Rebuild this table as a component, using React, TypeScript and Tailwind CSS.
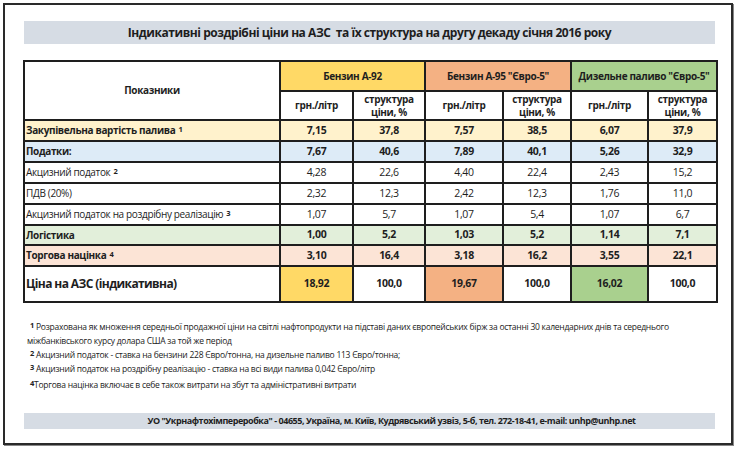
import React from "react";

const F = { fontFamily: '"Open Sans", "Noto Sans", sans-serif' };

type Row = {
  label: React.ReactNode;
  vals: string[];
  bg: string;
  bold: boolean;
  h: string;
};

const Sup = ({ n }: { n: string }) => (
  <sup className="text-[7.5px] font-bold relative -top-[2px] ml-[3px]">{n}</sup>
);

const rows: Row[] = [
  { label: <>Закупівельна вартість палива<Sup n="1" /></>, vals: ["7,15", "37,8", "7,57", "38,5", "6,07", "37,9"], bg: "bg-[#fff2cc]", bold: true, h: "h-[21px]" },
  { label: "Податки:", vals: ["7,67", "40,6", "7,89", "40,1", "5,26", "32,9"], bg: "bg-[#ddebf7]", bold: true, h: "h-[21px]" },
  { label: <>Акцизний податок<Sup n="2" /></>, vals: ["4,28", "22,6", "4,40", "22,4", "2,43", "15,2"], bg: "bg-white", bold: false, h: "h-[21px]" },
  { label: "ПДВ (20%)", vals: ["2,32", "12,3", "2,42", "12,3", "1,76", "11,0"], bg: "bg-white", bold: false, h: "h-[21px]" },
  { label: <>Акцизний податок на роздрібну реалізацію<Sup n="3" /></>, vals: ["1,07", "5,7", "1,07", "5,4", "1,07", "6,7"], bg: "bg-white", bold: false, h: "h-[21px]" },
  { label: "Логістика", vals: ["1,00", "5,2", "1,03", "5,2", "1,14", "7,1"], bg: "bg-[#e2efda]", bold: true, h: "h-[20px]" },
  { label: <>Торгова націнка<Sup n="4" /></>, vals: ["3,10", "16,4", "3,18", "16,2", "3,55", "22,1"], bg: "bg-[#fce4d6]", bold: true, h: "h-[21px]" },
];

const totalBg = ["bg-[#ffd966]", "bg-white", "bg-[#f4b183]", "bg-white", "bg-[#a9d08e]", "bg-white"];

const cell = "border-2 border-[#1e1e1e]";

export default function App() {
  return (
    <div className="w-[740px] h-[449px] bg-white p-[3px] text-[#1e1e1e]" style={F}>
      <div className="w-[730px] h-[442px] border-2 border-[#2a2a2a] shadow-[1px_1px_0_#888] flex flex-col items-start">
        <div className="ml-[19px] mt-[16px] w-[691px] h-[23px] bg-[#d6dce4] flex items-center justify-center text-[12px] font-bold tracking-[-0.45px]">
          Індикативні роздрібні ціни на АЗС&nbsp; та їх структура на другу декаду січня 2016 року
        </div>
        <table className="ml-[18px] mt-[16px] w-[693px] table-fixed border-collapse text-[10px] tracking-[-0.35px]">
          <colgroup>
            <col className="w-[256px]" />
            <col className="w-[73px]" />
            <col className="w-[72px]" />
            <col className="w-[78px]" />
            <col className="w-[68px]" />
            <col className="w-[77px]" />
            <col className="w-[69px]" />
          </colgroup>
          <tbody>
            <tr className="h-[30px]">
              <td rowSpan={2} className={`${cell} text-center font-bold`}>Показники</td>
              <td colSpan={2} className={`${cell} bg-[#ffd966] text-center font-bold`}>Бензин А-92</td>
              <td colSpan={2} className={`${cell} bg-[#f4b183] text-center font-bold`}>Бензин А-95 "Євро-5"</td>
              <td colSpan={2} className={`${cell} bg-[#a9d08e] text-center font-bold`}>Дизельне паливо "Євро-5"</td>
            </tr>
            <tr className="h-[29px]">
              {[0, 1, 2].map((i) => (
                <React.Fragment key={i}>
                  <td className={`${cell} text-center font-bold`}>грн./літр</td>
                  <td className={`${cell} text-center font-bold leading-[13px]`}>
                    структура
                    <br />
                    ціни, %
                  </td>
                </React.Fragment>
              ))}
            </tr>
            {rows.map((r, i) => (
              <tr key={i} className={`${r.h} ${r.bg}`}>
                <td className={`${cell} pl-[1px] ${r.bold ? "font-bold" : ""} whitespace-nowrap`}>{r.label}</td>
                {r.vals.map((v, j) => (
                  <td key={j} className={`${cell} text-center text-[10.5px] ${r.bold ? "font-bold" : ""}`}>{v}</td>
                ))}
              </tr>
            ))}
            <tr className="h-[36px]">
              <td className={`${cell} pl-[1px] text-[12px] font-bold tracking-[-0.6px]`}>Ціна на АЗС (індикативна)</td>
              {["18,92", "100,0", "19,67", "100,0", "16,02", "100,0"].map((v, j) => (
                <td key={j} className={`${cell} text-center text-[10.5px] font-bold ${totalBg[j]}`}>{v}</td>
              ))}
            </tr>
          </tbody>
        </table>
        <div className="ml-[22px] mt-[17px] text-[8.5px] leading-[14px] tracking-[-0.25px] text-[#222]">
          <div><Sup n="1" /> Розрахована як множення середньої продажної ціни на світлі нафтопродукти на підставі даних європейських бірж за останні 30 календарних днів та середнього</div>
          <div>міжбанківського курсу долара США за той же період</div>
          <div><Sup n="2" /> Акцизний податок - ставка на бензини 228 Євро/тонна, на дизельне паливо 113 Євро/тонна;</div>
          <div><Sup n="3" /> Акцизний податок на роздрібну реалізацію - ставка на всі види палива 0,042 Євро/літр</div>
          <div className="mt-[2px]"><Sup n="4" />Торгова націнка включає в себе також витрати на збут та адміністративні витрати</div>
        </div>
        <div className="ml-[19px] mt-auto mb-[14px] w-[691px] h-[16px] bg-[#d6dce4] flex items-center justify-center pl-[44px] text-[9px] font-bold tracking-[-0.45px]">
          УО "Укрнафтохімпереробка" - 04655, Україна, м. Київ, Кудрявський узвіз, 5-б, тел. 272-18-41, e-mail: unhp@unhp.net
        </div>
      </div>
    </div>
  );
}
